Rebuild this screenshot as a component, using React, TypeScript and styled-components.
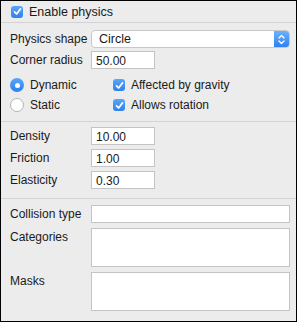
import React from 'react';
import styled, {createGlobalStyle} from 'styled-components';

const GlobalStyle = createGlobalStyle`
  html, body {
    margin: 0;
    padding: 0;
    background: #ffffff;
  }
  body {
    font-family: "Liberation Sans", Arial, sans-serif;
    font-size: 12px;
    color: #1a1a1a;
  }
`

const Panel = styled.div`
  box-sizing: border-box;
  width: 297px;
  height: 322px;
  border: 1px solid #000;
  background: #ececec;
  display: flex;
  flex-direction: column;
`
const Header = styled.div`
  height: 21px;
  display: flex;
  align-items: center;
  padding-left: 10px;
  gap: 6px;
  border-bottom: 1px solid #d3d3d3;
  font-size: 12.5px;
`
const Section = styled.div<{ $pt: number; $pb: number; $gap: number; $last?: boolean }>`
  display: flex;
  flex-direction: column;
  gap: ${p => p.$gap}px;
  padding: ${p => p.$pt}px 6px ${p => p.$pb}px 9px;
  border-bottom: ${p => (p.$last ? 'none' : '1px solid #d3d3d3')};
  flex: ${p => (p.$last ? 1 : 'none')};
`
const Row = styled.div<{ $top?: boolean }>`
  display: grid;
  grid-template-columns: 81px 1fr;
  align-items: ${p => (p.$top ? 'start' : 'center')};
`
const Label = styled.span<{ $top?: boolean }>`
  padding-top: ${p => (p.$top ? '2px' : '0')};
  white-space: nowrap;
`
const Field = styled.div<{ $w?: number; $h?: number }>`
  box-sizing: border-box;
  width: ${p => (p.$w ? `${p.$w}px` : '199px')};
  height: ${p => p.$h ?? 18}px;
  background: #fff;
  border: 1px solid #c4c4c4;
  padding: 2px 4px 0;
  line-height: 14px;
`
const Select = styled.div`
  box-sizing: border-box;
  height: 18px;
  background: #fff;
  border: 1px solid #c8c8c8;
  border-radius: 4px;
  display: flex;
  align-items: stretch;
  overflow: hidden;
`
const SelectText = styled.span`
  flex: 1;
  padding-left: 7px;
  line-height: 16px;
  font-size: 12.5px;
`
const Stepper = styled.span`
  width: 15px;
  background: linear-gradient(#6cb3fa, #2f80f1);
  display: flex;
  align-items: center;
  justify-content: center;
`
const Options = styled.div`
  display: grid;
  grid-template-columns: 103px 1fr;
  grid-auto-rows: 20px;
  margin-top: 3px;
`
const Option = styled.label`
  display: flex;
  align-items: center;
  gap: 6px;
  white-space: nowrap;
`
const Box = styled.span`
  box-sizing: border-box;
  width: 12px;
  height: 12px;
  border-radius: 3px;
  background: linear-gradient(#5aa6f8, #2f80f1);
  display: flex;
  align-items: center;
  justify-content: center;
  flex: none;
`
const Radio = styled.span<{ $on?: boolean }>`
  box-sizing: border-box;
  width: 14px;
  height: 14px;
  border-radius: 50%;
  flex: none;
  display: flex;
  align-items: center;
  justify-content: center;
  background: ${p => (p.$on ? 'linear-gradient(#5aa6f8, #2f80f1)' : '#fff')};
  border: ${p => (p.$on ? 'none' : '1px solid #b4b4b4')};
  &::after {
    content: "";
    display: ${p => (p.$on ? 'block' : 'none')};
    width: 5px;
    height: 5px;
    border-radius: 50%;
    background: #fff;
  }
`

const Check = () => (
    <svg width="9" height="9" viewBox="0 0 9 9">
        <path d="M1.5 4.8 L3.6 7 L7.6 1.8" fill="none" stroke="#fff" strokeWidth="1.7" strokeLinecap="round" strokeLinejoin="round"/>
    </svg>
)

const Checkbox = () => (
    <Box><Check/></Box>
)

const Arrows = () => (
    <svg width="7" height="11" viewBox="0 0 7 11">
        <path d="M1 4 L3.5 1.5 L6 4 M1 7 L3.5 9.5 L6 7" fill="none" stroke="#fff" strokeWidth="1.3" strokeLinecap="round" strokeLinejoin="round"/>
    </svg>
)

export default function App() {
    return (
        <>
            <GlobalStyle/>
            <Panel>
                <Header>
                    <Checkbox/>
                    <span>Enable physics</span>
                </Header>
                <Section $pt={7} $pb={6} $gap={3}>
                    <Row>
                        <Label>Physics shape</Label>
                        <Select>
                            <SelectText>Circle</SelectText>
                            <Stepper><Arrows/></Stepper>
                        </Select>
                    </Row>
                    <Row>
                        <Label>Corner radius</Label>
                        <Field $w={64}>50.00</Field>
                    </Row>
                    <Options>
                        <Option><Radio $on/>Dynamic</Option>
                        <Option><Checkbox/>Affected by gravity</Option>
                        <Option><Radio/>Static</Option>
                        <Option><Checkbox/>Allows rotation</Option>
                    </Options>
                </Section>
                <Section $pt={5} $pb={9} $gap={4}>
                    <Row>
                        <Label>Density</Label>
                        <Field $w={64}>10.00</Field>
                    </Row>
                    <Row>
                        <Label>Friction</Label>
                        <Field $w={64}>1.00</Field>
                    </Row>
                    <Row>
                        <Label>Elasticity</Label>
                        <Field $w={64}>0.30</Field>
                    </Row>
                </Section>
                <Section $pt={6} $pb={0} $gap={5} $last>
                    <Row>
                        <Label>Collision type</Label>
                        <Field/>
                    </Row>
                    <Row $top>
                        <Label $top>Categories</Label>
                        <Field $h={39}/>
                    </Row>
                    <Row $top>
                        <Label $top>Masks</Label>
                        <Field $h={39}/>
                    </Row>
                </Section>
            </Panel>
        </>
    );
}
